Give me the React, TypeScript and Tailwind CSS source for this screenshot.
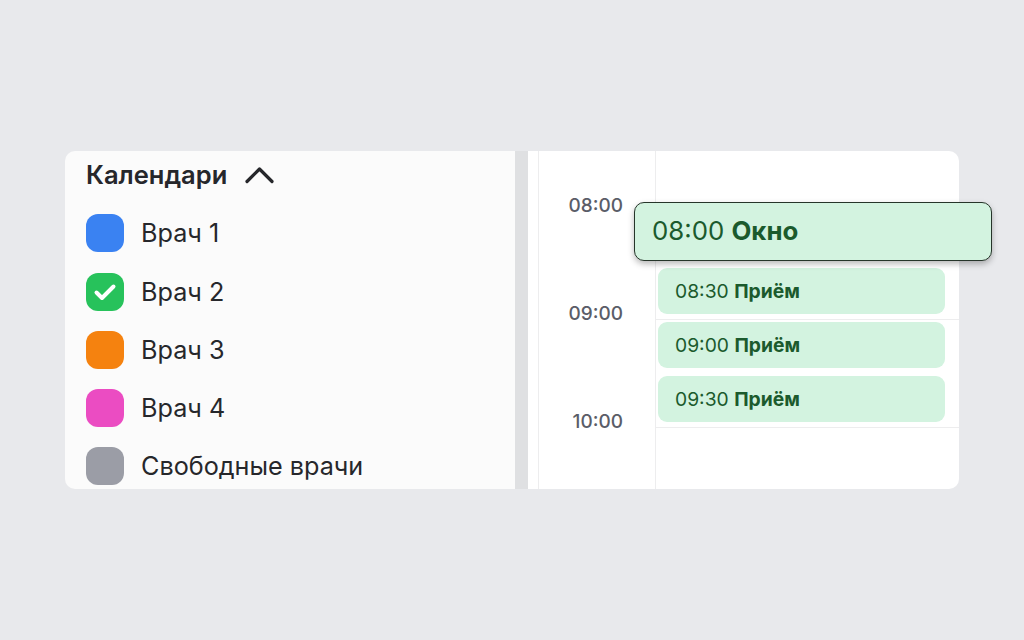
const calendars = [
  { name: "Врач 1", color: "bg-[#3a82f2]", checked: false },
  { name: "Врач 2", color: "bg-[#27c25b]", checked: true },
  { name: "Врач 3", color: "bg-[#f5820f]", checked: false },
  { name: "Врач 4", color: "bg-[#eb4cc2]", checked: false },
  { name: "Свободные врачи", color: "bg-[#9b9da6]", checked: false },
];

const events = [
  { time: "08:30", title: "Приём", top: 117 },
  { time: "09:00", title: "Приём", top: 171 },
  { time: "09:30", title: "Приём", top: 225 },
];

function CheckMark() {
  return (
    <svg width="38" height="38" viewBox="0 0 38 38" fill="none">
      <path
        d="M10.5 19.5l5.5 5.5L27.5 13.5"
        stroke="white"
        strokeWidth="4"
        strokeLinecap="round"
        strokeLinejoin="round"
      />
    </svg>
  );
}

function Chevron() {
  return (
    <svg width="29" height="17" viewBox="0 0 29 17" fill="none">
      <path
        d="M2 14.5L14.5 2L27 14.5"
        stroke="#26272b"
        strokeWidth="3.2"
        strokeLinecap="round"
        strokeLinejoin="round"
      />
    </svg>
  );
}

export default function App() {
  return (
    <div className="h-screen w-full bg-[#e8e9ec] font-['Inter',sans-serif] pt-[151px] pl-[65px]">
      <div className="flex h-[338px] w-[894px]">
        {/* calendars list */}
        <div className="w-[450px] shrink-0 rounded-l-[10px] bg-[#fbfbfb] pl-[21px] pt-[5px]">
          <div className="flex items-center gap-[18px]">
            <span className="text-[25.5px] font-semibold text-[#26272b]">Календари</span>
            <Chevron />
          </div>
          <div className="mt-[20px] flex flex-col gap-[20.25px]">
            {calendars.map((c) => (
              <div key={c.name} className="flex items-center gap-[17px]">
                <div className={`h-[38px] w-[38px] rounded-[12px] ${c.color}`}>
                  {c.checked && <CheckMark />}
                </div>
                <span className="text-[25.2px] leading-[38px] text-[#26272b]">{c.name}</span>
              </div>
            ))}
          </div>
        </div>

        {/* splitter */}
        <div className="w-[13px] shrink-0 bg-[#dfe0e2]" />

        {/* day grid */}
        <div className="flex flex-1 rounded-r-[10px] bg-white pl-[10px]">
          <div className="flex w-[118px] shrink-0 flex-col border-x border-[#ededee] pr-[32px] text-right text-[19px] font-medium text-[#5a5d68]">
            <div className="mt-[42px] leading-[26px]">08:00</div>
            <div className="mt-[82px] leading-[26px]">09:00</div>
            <div className="mt-[82px] leading-[26px]">10:00</div>
          </div>
          <div className="relative flex flex-1 flex-col">
            <div className="h-[60px]" />
            <div className="h-[108px] border-t border-[#ededee]" />
            <div className="h-[108px] border-t border-[#ededee]" />
            <div className="flex-1 border-t border-[#ededee]" />

            {events.map((e) => (
              <div
                key={e.time}
                className="absolute left-[2px] right-[14px] flex h-[46px] items-center rounded-[9px] bg-[#d3f3e0] pl-[17px] text-[19.3px] text-[#1b5a2d]"
                style={{ top: e.top }}
              >
                {e.time}&nbsp;<span className="font-bold">{e.title}</span>
              </div>
            ))}

            {/* slot being dragged */}
            <div className="absolute left-[-22px] top-[51px] flex h-[59px] w-[358px] items-center rounded-[10px] border border-[#26352a] bg-[#d3f3e0] pl-[17px] text-[25.8px] text-[#1b5a2d] shadow-[0_3px_6px_rgba(0,0,0,0.28)]">
              08:00&nbsp;<span className="font-bold">Окно</span>
            </div>
          </div>
        </div>
      </div>
    </div>
  );
}
